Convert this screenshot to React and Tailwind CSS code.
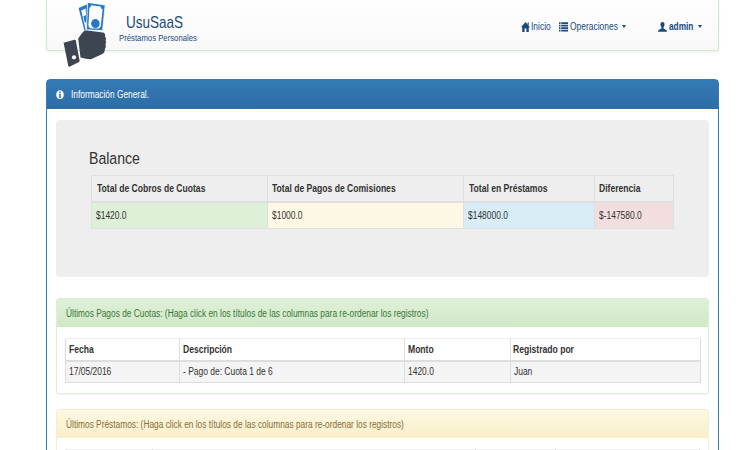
import { clsx } from "clsx";

function T({ className, children }) {
  return (
    <span className={clsx("inline-block origin-left whitespace-nowrap", className)}>
      {children}
    </span>
  );
}

const reg = "scale-x-[0.845]";
const bold = "scale-x-[0.857] font-bold";

function Logo() {
  return (
    <svg viewBox="0 0 50 70" className="absolute left-[13px] top-0 h-[70px] w-[50px]">
      <path d="M18.6 8 L27.6 4.2 L28.6 30 L24.4 30.5 Z" fill="#2878c4" />
      <path d="M21.2 10.6 L25.6 8.6 L26.4 21 L27.4 30 L25.8 30.2 Z" fill="#fff" />
      <path d="M23.4 16.5 L27 14.5 L27.2 22 L24.8 22.5 Z" fill="#2878c4" />
      <path d="M27.6 2.4 L45.2 5 L42.6 30.6 L26.4 29.8 Z" fill="#2878c4" stroke="#fff" strokeWidth="0.8" />
      <path d="M31.2 5.2 L40.6 6.6 Q40.8 9 42.6 9.4 L40.8 26 L39.2 28.6 L30 28.2 L28.4 26 L29.4 7.8 Q31 7.4 31.2 5.2 Z" fill="#fff" />
      <ellipse cx="35.4" cy="23.6" rx="4.3" ry="4.5" fill="#2878c4" />
      <path d="M3.6 42.8 L14.5 39.7 Q15.6 39.6 15.8 40.6 L19.6 60.6 Q19.7 61.8 18.6 62.2 L9.4 66.7 Q8.6 67 8.3 66 Z" fill="#3d4650" />
      <circle cx="14" cy="57.3" r="2.1" fill="#fff" />
      <path d="M18.2 38.4 Q21.6 33.6 23.6 31.6 Q25 30.4 27 30.6 L43 32.6 Q45.8 33.6 45 36.5 Q46.8 38 45.6 40.2 Q47 42.5 45.5 44.5 Q46.6 47 44.9 49 Q45 53.4 41.2 54.5 L31.6 59 Q28.4 59.8 20.5 57.6 Z" fill="#3d4650" />
    </svg>
  );
}

function Caret() {
  return <span className="ml-[4px] border-x-[2.5px] border-t-[3px] border-x-transparent border-t-[#1a4a7c]" />;
}

function Navbar() {
  return (
    <nav className="relative flex h-[51px] rounded-b-[3px] border border-t-0 border-[#c9ecca] bg-linear-to-b from-white to-[#f8f8f8] text-[#1a4a7c] shadow-[0_1px_3px_rgba(0,0,0,0.08)]">
      <Logo />
      <div className="flex w-[220px] flex-col pl-[71.5px] pt-[14px]">
        <T className="ml-[7px] w-[60px] scale-x-[0.86] text-[15.7px] leading-[17px]">UsuSaaS</T>
        <T className="w-[80px] scale-x-[0.815] text-[9.5px] leading-[13px]">Préstamos Personales</T>
      </div>
      <div className="ml-auto flex h-[53px] items-center pr-[16px] text-[10px]">
        <svg viewBox="0 0 9 10" className="mr-[1px] h-[10px] w-[9px]" fill="#1a4a7c">
          <path d="M4.5 0 L9 5.3 H7.8 V10 H5.4 V6.6 H3.6 V10 H1.2 V5.3 H0 Z M6.6 .6 H7.8 V3.4 L6.6 2 Z" />
        </svg>
        <T className={clsx(reg, "w-[28.5px]")}>Inicio</T>
        <svg viewBox="0 0 9 10" className="mr-[1.5px] h-[10px] w-[9px]" fill="#1a4a7c">
          <path d="M0 .3h1.5v1.7H0z M2.2 .3H9v1.7H2.2z M0 2.8h1.5v1.7H0z M2.2 2.8H9v1.7H2.2z M0 5.3h1.5V7H0z M2.2 5.3H9V7H2.2z M0 7.8h1.5v1.7H0z M2.2 7.8H9v1.7H2.2z" />
        </svg>
        <T className={clsx(reg, "w-[48px]")}>Operaciones</T>
        <Caret />
        <svg viewBox="0 0 9 10" className="ml-[32px] mr-[2.5px] h-[10px] w-[9px]" fill="#1a4a7c">
          <path d="M4.5 0 C6 0 6.7 1.1 6.5 2.8 C6.4 4.2 5.8 4.8 5.5 5.4 C5.4 6.4 6 6.8 7.4 7.4 C8.6 7.9 9 8.4 9 9.8 H0 C0 8.4 .4 7.9 1.6 7.4 C3 6.8 3.6 6.4 3.5 5.4 C3.2 4.8 2.6 4.2 2.5 2.8 C2.3 1.1 3 0 4.5 0 Z" />
        </svg>
        <T className="w-[25px] scale-x-[0.83] font-bold">admin</T>
        <Caret />
      </div>
    </nav>
  );
}

const balance = [
  { w: "w-[175.5px]", title: "Total de Cobros de Cuotas", value: "$1420.0", bg: "bg-[#dff0d8]" },
  { w: "w-[196.5px]", title: "Total de Pagos de Comisiones", value: "$1000.0", bg: "bg-[#fcf8e3]" },
  { w: "w-[130.5px]", title: "Total en Préstamos", value: "$148000.0", bg: "bg-[#d9edf7]" },
  { w: "w-[79.5px]", title: "Diferencia", value: "$-147580.0", bg: "bg-[#f2dede]" },
];

function Balance() {
  return (
    <section className="h-[157px] rounded-[4px] bg-[#eeeeee] pl-[35px] pt-[28px]">
      <h2 className="ml-[-2.5px] h-[27px] text-[16.8px] leading-[21px] text-[#333]">
        <T className="scale-x-[0.84]">Balance</T>
      </h2>
      <table className="w-[583px] table-fixed border-collapse text-left text-[10px] leading-[12px] text-[#333]">
        <thead>
          <tr className="h-[26px]">
            {balance.map((c) => (
              <th key={c.title} className={clsx(c.w, "border border-b-2 border-[#dfdfdf] p-0 pl-[4.5px] pt-px")}>
                <T className={bold}>{c.title}</T>
              </th>
            ))}
          </tr>
        </thead>
        <tbody>
          <tr className="h-[26.5px]">
            {balance.map((c) => (
              <td key={c.title} className={clsx(c.bg, "border border-[#dfdfdf] p-0 pl-[4px] pt-px")}>
                <T className={reg}>{c.value}</T>
              </td>
            ))}
          </tr>
        </tbody>
      </table>
    </section>
  );
}

const payments = [
  { w: "w-[114px]", title: "Fecha", value: "17/05/2016" },
  { w: "w-[225px]", title: "Descripción", value: "- Pago de: Cuota 1 de 6" },
  { w: "w-[105.5px]", title: "Monto", value: "1420.0" },
  { w: "w-[190.5px]", title: "Registrado por", value: "Juan" },
];

function Payments() {
  return (
    <section className="h-[96px] rounded-[3px] border border-[#dcefd3] shadow-[0_1px_1px_rgba(0,0,0,0.05)]">
      <header className="flex h-[28px] items-center bg-linear-to-b from-[#dff0d8] to-[#d0e9c6] pl-[8.5px] text-[10px] text-[#3c763d]">
        <T className="scale-x-[0.835]">Últimos Pagos de Cuotas: (Haga click en los títulos de las columnas para re-ordenar los registros)</T>
      </header>
      <table className="ml-[8px] mt-[11px] w-[635px] table-fixed border-collapse text-left text-[10px] leading-[12px] text-[#333]">
        <thead>
          <tr className="h-[22px]">
            {payments.map((c) => (
              <th key={c.title} className={clsx(c.w, "border border-b-2 border-[#dddddd] border-t-[#eeeeee] p-0 pl-[2.5px] pt-px")}>
                <T className={bold}>{c.title}</T>
              </th>
            ))}
          </tr>
        </thead>
        <tbody>
          <tr className="h-[22px] bg-[#f4f4f4]">
            {payments.map((c) => (
              <td key={c.title} className="border border-[#dddddd] p-0 pl-[3px]">
                <T className={reg}>{c.value}</T>
              </td>
            ))}
          </tr>
        </tbody>
      </table>
    </section>
  );
}

function Loans() {
  return (
    <section className="mt-[15px] h-[96px] rounded-[3px] border border-[#faebcc]">
      <header className="flex h-[28px] items-center bg-linear-to-b from-[#fcf8e3] to-[#f8efc9] pl-[8.5px] text-[10px] text-[#8a6d3b]">
        <T className="scale-x-[0.834]">Últimos Préstamos: (Haga click en los títulos de las columnas para re-ordenar los registros)</T>
      </header>
      <div className="ml-[8px] mt-[11px] flex h-[22px] w-[635px] border-t border-[#eeeeee]">
        <div className="-mt-px w-[88px] border-r border-[#dddddd]" />
        <div className="-mt-px w-[323px] border-r border-[#dddddd]" />
        <div className="-mt-px w-[80px] border-r border-[#dddddd]" />
        <div className="-mt-px w-[144px] border-r border-[#dddddd]" />
      </div>
    </section>
  );
}

export default function App() {
  return (
    <div className="h-[450px] w-[750px] overflow-hidden bg-white pl-[46px] font-['Liberation_Sans',Arial,sans-serif]">
      <div className="w-[673px]">
        <Navbar />
        <main className="mt-[28px] h-[420px] rounded-t-[4px] border border-[#337ab7]">
          <header className="flex h-[29px] items-center bg-linear-to-b from-[#337ab7] to-[#2e6da4] pl-[9px] text-[10px] text-white">
            <svg viewBox="0 0 8 10" className="mr-[7px] h-[9.5px] w-[8px]">
              <ellipse cx="4" cy="5" rx="4" ry="4.8" fill="#fff" />
              <path d="M3.3 1.6h1.5v1.5H3.3z M2.8 4h2v3.2h.6v1H2.7v-1h.6V5h-.5z" fill="#2e6da4" />
            </svg>
            <T className="scale-x-[0.835]">Información General.</T>
          </header>
          <div className="px-[9px] pt-[11px]">
            <Balance />
            <div className="h-[21px]" />
            <Payments />
            <Loans />
          </div>
        </main>
      </div>
    </div>
  );
}
